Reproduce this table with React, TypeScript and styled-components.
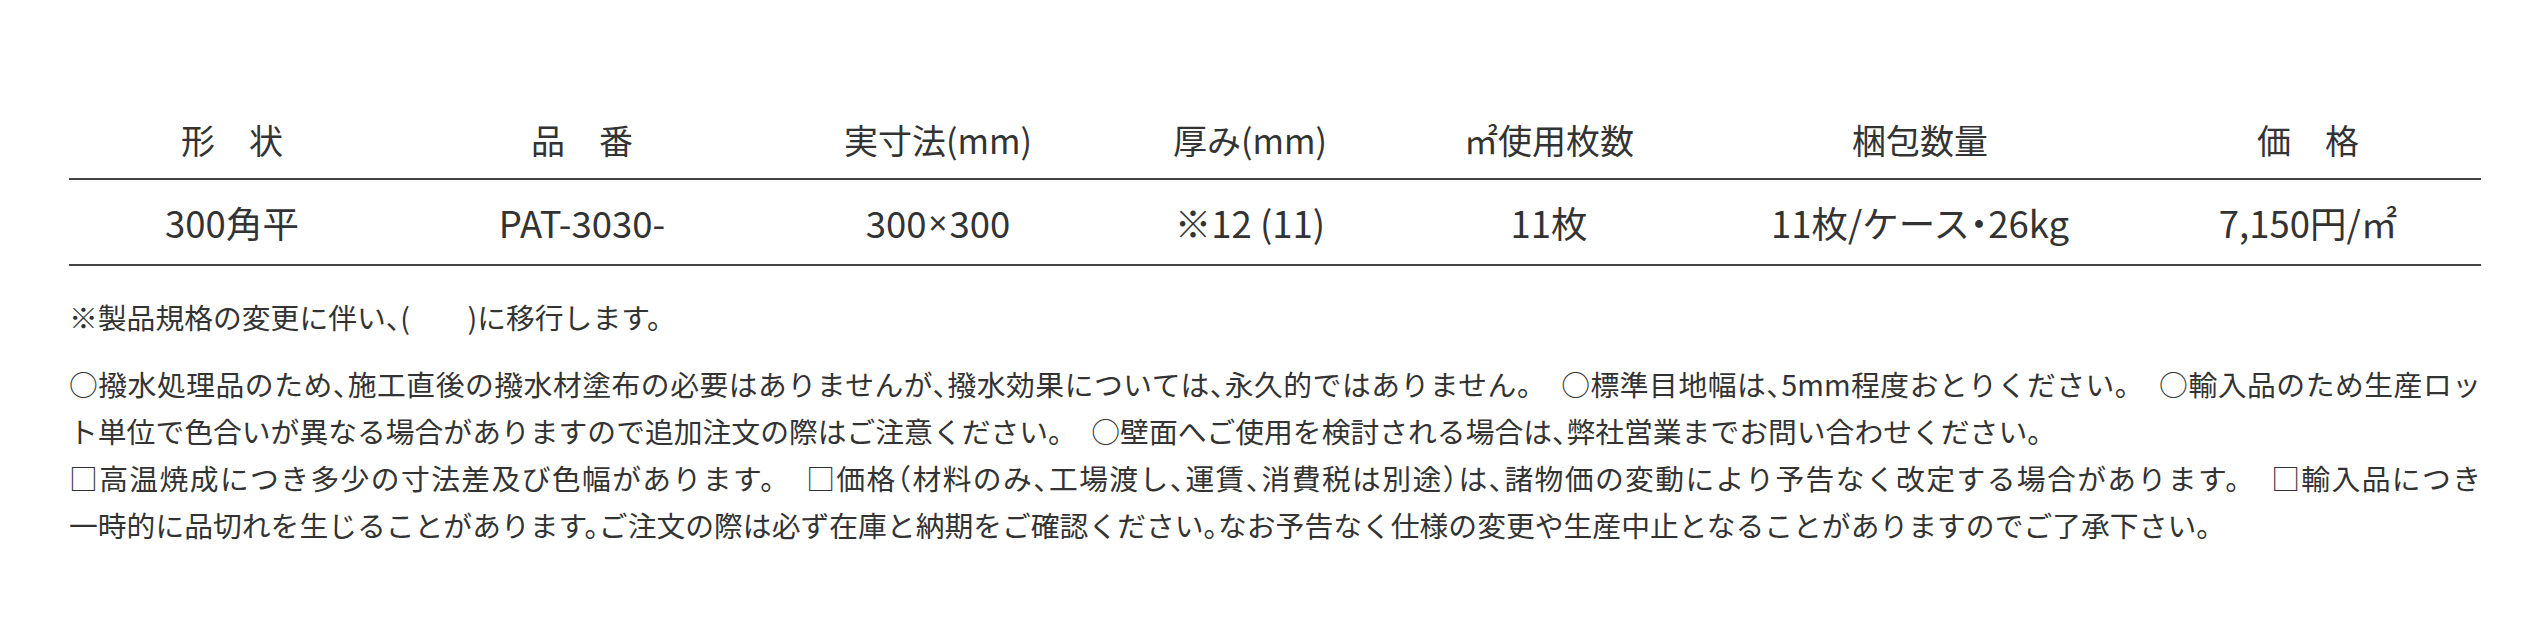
import React from "react"
import styled, { createGlobalStyle } from "styled-components"

const GlobalStyle = createGlobalStyle`
  html, body {
    margin: 0;
    padding: 0;
    background: #ffffff;
  }
  body {
    font-family: "Noto Sans CJK JP", "Noto Sans", sans-serif;
    color: #333333;
  }
`

const Page = styled.div`
  width: 2544px;
  box-sizing: border-box;
  padding: 100px 63px 0 69px;
`

const SpecTable = styled.div`
  display: grid;
  grid-template-columns: 326px 374px 338px 286px 312px 430px 346px;
`

const HeadCell = styled.div`
  height: 78px;
  display: flex;
  align-items: center;
  justify-content: center;
  font-size: 34px;
  font-weight: 400;
  white-space: nowrap;
  border-bottom: 2px solid #444444;
`

const BodyCell = styled.div`
  height: 84px;
  display: flex;
  align-items: center;
  justify-content: center;
  font-size: 36.5px;
  font-weight: 400;
  white-space: nowrap;
  font-feature-settings: "halt";
  border-bottom: 2px solid #444444;
`

const Times = styled.span`
  font-family: "Noto Sans", "Liberation Sans", sans-serif;
  font-size: 0.9em;
  margin: 0 2px;
`

const Note = styled.p`
  margin: 27px 0 0;
  font-size: 28.8px;
  line-height: 47px;
  font-feature-settings: "halt";
`

const Cautions = styled.div`
  margin-top: 20px;
  font-size: 28.8px;
  line-height: 47px;
  font-feature-settings: "halt";
`

const CautionLine = styled.span<{ $full?: boolean }>`
  display: block;
  text-align: ${(p) => (p.$full ? "justify" : "left")};
  text-align-last: ${(p) => (p.$full ? "justify" : "auto")};
`

const heads = ["形　状", "品　番", "実寸法(mm)", "厚み(mm)", "㎡使用枚数", "梱包数量", "価　格"]
const values: React.ReactNode[] = [
  "300角平",
  "PAT-3030-",
  <>
    300<Times>×</Times>300
  </>,
  "※12 (11)",
  "11枚",
  "11枚/ケース・26kg",
  "7,150円/㎡",
]

const lines: { text: string; full: boolean }[] = [
  {
    text: "○撥水処理品のため、施工直後の撥水材塗布の必要はありませんが、撥水効果については、永久的ではありません。　○標準目地幅は、5mm程度おとりください。　○輸入品のため生産ロッ",
    full: true,
  },
  {
    text: "ト単位で色合いが異なる場合がありますので追加注文の際はご注意ください。　○壁面へご使用を検討される場合は、弊社営業までお問い合わせください。",
    full: false,
  },
  {
    text: "□高温焼成につき多少の寸法差及び色幅があります。　□価格（材料のみ、工場渡し、運賃、消費税は別途）は、諸物価の変動により予告なく改定する場合があります。　□輸入品につき",
    full: true,
  },
  {
    text: "一時的に品切れを生じることがあります。ご注文の際は必ず在庫と納期をご確認ください。なお予告なく仕様の変更や生産中止となることがありますのでご了承下さい。",
    full: false,
  },
]

export default function App() {
  return (
    <>
      <GlobalStyle />
      <Page>
        <SpecTable>
          {heads.map((h) => (
            <HeadCell key={h}>{h}</HeadCell>
          ))}
          {values.map((v, i) => (
            <BodyCell key={i}>{v}</BodyCell>
          ))}
        </SpecTable>
        <Note>※製品規格の変更に伴い、(　　)に移行します。</Note>
        <Cautions>
          {lines.map((l, i) => (
            <CautionLine key={i} $full={l.full}>
              {l.text}
            </CautionLine>
          ))}
        </Cautions>
      </Page>
    </>
  )
}
